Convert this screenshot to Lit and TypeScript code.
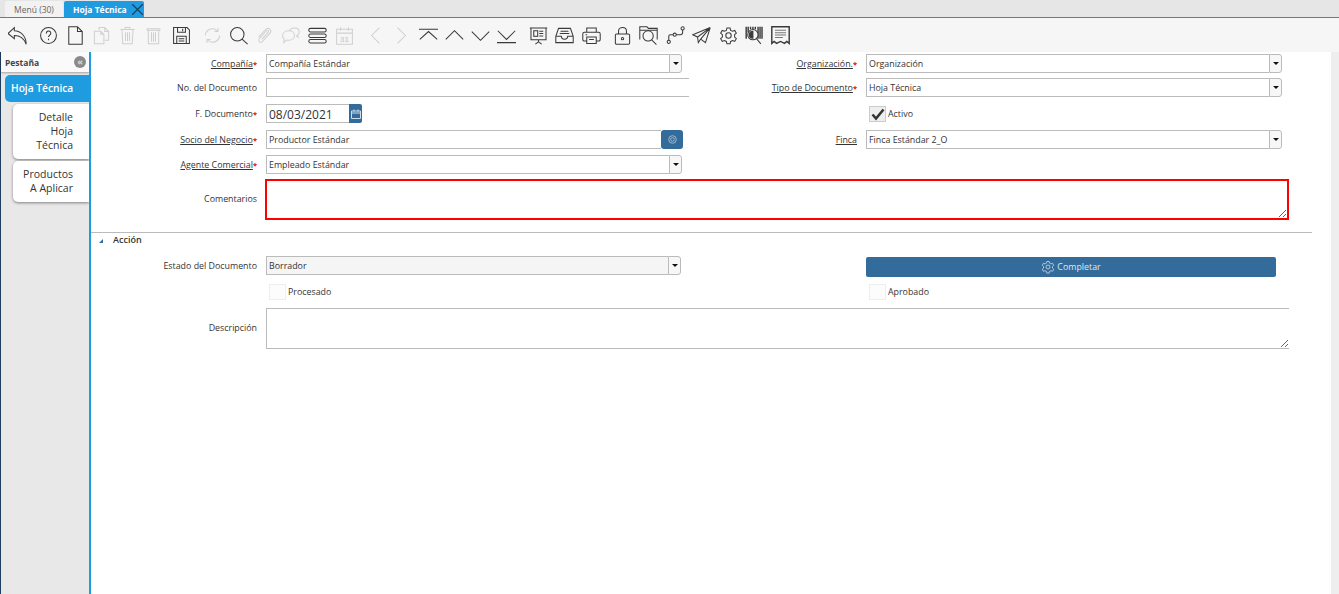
import { LitElement, html, css, svg } from 'lit'
import { customElement } from 'lit/decorators.js'

// toolbar: [name, left margin, disabled]
const TOOLS: [string, number, boolean][] = [
  ['undo', 4, false],
  ['help', 5, false],
  ['page', 1, false],
  ['copy', 0, true],
  ['trash', 0, true],
  ['trash2', 0, true],
  ['save', 2, false],
  ['refresh', 5, true],
  ['find', 0, false],
  ['clip', 0, true],
  ['chat', 0, true],
  ['rows', 1, false],
  ['cal', 1, true],
  ['prev', 5, true],
  ['next', 0, true],
  ['first', 1, false],
  ['up', 0, false],
  ['down', 0, false],
  ['last', 0, false],
  ['report', 6, false],
  ['tray', 0, false],
  ['print', 1, false],
  ['lock', 5, false],
  ['folder', 0, false],
  ['route', 1, false],
  ['send', 0, false],
  ['gear', 1, false],
  ['barcode', 0, false],
  ['receipt', 0, false],
]

const GEAR = svg`<circle cx="12" cy="12" r="3.4"/><path d="M10 2.5h4l.7 3 2.4 1.2 2.8-1.1 2 3.4-2.2 2v3l2.2 2-2 3.4-2.8-1.1-2.4 1.2-.7 3h-4l-.7-3-2.4-1.2-2.8 1.1-2-3.4 2.2-2v-3l-2.2-2 2-3.4 2.8 1.1 2.4-1.2z"/>`

const ICONS: Record<string, unknown> = {
  undo: svg`<path d="M8 2 0 9.500 8 16v-4c7 0 12 3 15 11C23 13 16 6 8 6z"/>`,
  help: svg`<circle cx="12" cy="12" r="10"/><path d="M9.300 9.500c0-4 5.600-4 5.600-.5 0 2.300-2.900 2.500-2.900 5"/><path d="M12 16v2"/>`,
  page: svg`<path d="M3.500 1h11l6 6v16h-17zM14.500 1v6h6"/>`,
  copy: svg`<path d="M9 5.500V2h7l5 5v11h-5M16 2v5h5M3 6.500h8l4 4v12H3zM11 6.500v4h4"/>`,
  trash: svg`<path d="M3 4.500h18M9 4.500V2h6v2.500M5 4.500l1 18h12l1-18M9.500 8v11M12 8v11M14.500 8v11"/>`,
  trash2: svg`<path d="M4 3.500h16v2H4zM5.500 5.500v17h13v-17M9.500 8v12M12 8v12M14.500 8v12"/>`,
  save: svg`<path d="M2 2h17l3 3v17H2zM7 2v6h10V2M13.500 3.500v3M6 22v-9h12v9M8.500 16h7M8.500 19h7"/>`,
  refresh: svg`<path d="M3 12c0-6 6-10 12-8l4 3M19 2.500V7h-4.500M21 12c0 6-6 10-12 8l-4-3M5 21.500V17h4.500"/>`,
  find: svg`<circle cx="10.500" cy="10.500" r="8.500"/><path d="m16.500 16.500 7 6.500"/>`,
  clip: svg`<path d="M4.500 14 14 4c3-3 8 1 5 5L9 20c-2 2-6-1-3.500-4l9-10c1.500-1.500 3.500.5 2 2l-8 9"/>`,
  chat: svg`<path d="M10 6c4 0 7 2.500 7 6s-3 6-7 6H6.500L3.500 21l.5-4.500C2.500 15.300 2 13.500 2 12c0-3.500 3.500-6 8-6z"/><path d="M11 6c.5-2 3-3.500 6-3.500 3.500 0 6 2 6 5 0 1.500-.7 2.800-2 3.600l.5 3-2.500-2"/>`,
  rows: svg`<rect x="1" y="3" width="22" height="4.500" rx="2.200"/><rect x="1" y="10" width="22" height="4.500" rx="2.200"/><rect x="1" y="17" width="22" height="4.500" rx="2.200"/>`,
  cal: svg`<path d="M2 4h20v19H2zM2 9h20M7 1.500V6M17 1.500V6"/><text x="12" y="20" text-anchor="middle" font-size="10" font-family="Liberation Sans, sans-serif" font-weight="700" stroke="none" fill="currentColor">31</text>`,
  prev: svg`<path d="M17 2 7 12l10 10"/>`,
  next: svg`<path d="M7 2l10 10L7 22"/>`,
  first: svg`<path d="M0 4h24M1 17 12 7l11 10"/>`,
  up: svg`<path d="M1 17 12 6l11 11"/>`,
  down: svg`<path d="M1 7l11 11L23 7"/>`,
  last: svg`<path d="M1 6l11 11L23 6M0 21h24"/>`,
  report: svg`<path d="M1 2.500h22M2.500 2.500v15h19v-15M12 17.500V20M8 23l4-3 4 3"/><rect x="6" y="6" width="5" height="7"/><path d="M13 6.500h5M13 9.500h5M13 12.500h5"/>`,
  tray: svg`<path d="M4.500 3h15l3.500 10v8H1v-8zM1 13h7c0 5 8 5 8 0h7M7 6.500h10M6 9.500h12"/>`,
  print: svg`<path d="M6 8V2.500h12V8M6 19H3.500A2 2 0 0 1 1 17v-7a2 2 0 0 1 2-2h18a2 2 0 0 1 2 2v7a2 2 0 0 1-2.500 2H18M6 14h12v8H6zM9 17h6M4.500 11h2"/>`,
  lock: svg`<rect x="3" y="10" width="18" height="13" rx="1.500"/><path d="M7 10V6.500c0-6 10-6 10 0V10"/><circle cx="12" cy="16" r="1.500"/>`,
  folder: svg`<path d="M1 17V1h9l2 2h11v14M1 5.500h22"/><circle cx="11.500" cy="12.500" r="6.500"/><path d="m16 17.500 6 6"/>`,
  route: svg`<circle cx="3.500" cy="20" r="2"/><circle cx="11" cy="11" r="2"/><circle cx="21" cy="3" r="2"/><path d="M3.500 18v-5c0-2 1-2 2-2H9M13 11h5c2 0 3-1 3-3V5"/>`,
  send: svg`<path d="M23 2 1 11l6 3zM23 2 7 14l1 7 3-4.500zM23 2l-6 19-6-4.500"/>`,
  gear: GEAR,
  barcode: svg`<path d="M1.500 1v15M4 1v7M7 1v3M10 1v3M13 1v3M16.500 1v15M19 1v15M21.500 1v15" stroke-width="1.800"/><circle cx="10" cy="11" r="6.500" fill="#f6f6f6"/><path d="M10 6.500a4.500 4.500 0 0 0 0 9z" fill="currentColor"/><path d="m14.500 16 5.500 6.500"/>`,
  receipt: svg`<path d="M1 1h22v21l-3-2.500-3 2.500-5-2.500-5 2.500-3-2.500-3 2.500z" stroke-width="1.800"/><path d="M5 5.500h14M5 8.500h14M5 11.500h14M5 14.500h10" stroke="#777" />`,
}

@customElement('app-root')
export class AppRoot extends LitElement {
  static styles = css`
    :host {
      display: block;
      height: 594px;
      overflow: hidden;
      font-family: 'Open Sans', sans-serif;
      font-size: 8.850px;
      color: #333;
      background: #fff;
    }

    /* window tabs */
    .tabs {
      height: 17px;
      display: flex;
      align-items: flex-end;
      gap: 1px;
      padding-left: 5px;
      background: #e6e6e6;
      border-bottom: 1px solid #2a8fc9;
    }
    .tab {
      height: 16px;
      display: flex;
      align-items: center;
      justify-content: center;
      box-sizing: border-box;
      border-radius: 2px 2px 0 0;
      font-size: 8.500px;
      white-space: nowrap;
    }
    .tab-menu {
      width: 58px;
      background: #f2f2f2;
      color: #666;
    }
    .tab-active {
      width: 80px;
      padding-left: 9px;
      justify-content: flex-start;
      gap: 5px;
      background: #1f9ce0;
      color: #fff;
      font-weight: 700;
    }
    .tab-close {
      width: 11px;
      height: 11px;
      flex: none;
      fill: none;
      stroke: #14456e;
      stroke-width: 1.300;
    }

    /* toolbar */
    .toolbar {
      height: 34px;
      display: flex;
      align-items: center;
      background: #f6f6f6;
    }
    .tool {
      width: 26px;
      height: 26px;
      flex: none;
      display: flex;
      align-items: center;
      justify-content: center;
      color: #3a3a3a;
    }
    .tool.off {
      color: #d0d0d0;
    }
    .tool svg {
      width: 19px;
      height: 19px;
      fill: none;
      stroke: currentColor;
      stroke-width: 1.300;
    }

    .body {
      display: flex;
      height: 543px;
      border-left: 1px solid #1c3f60;
    }

    /* left panel */
    .side {
      width: 88px;
      flex: none;
      display: flex;
      flex-direction: column;
      align-items: flex-end;
      background: #e8e8e8;
    }
    .side-head {
      align-self: stretch;
      height: 20px;
      display: flex;
      align-items: center;
      justify-content: space-between;
      padding: 0 3px 0 4px;
      background: #fafafa;
      box-shadow: 0 1px 2px rgba(0, 0, 0, 0.3);
      font-size: 8.500px;
      font-weight: 700;
      color: #444;
    }
    .collapse {
      width: 12px;
      height: 12px;
      border-radius: 50%;
      background: #8a8a8a;
      color: #ddd;
      font-size: 9px;
      line-height: 11px;
      text-align: center;
    }
    .stab {
      box-sizing: border-box;
      width: 76px;
      margin-top: 2px;
      padding: 6px 16px 7px 4px;
      border-radius: 5px 0 0 5px;
      background: #fff;
      box-shadow: 0 1px 3px rgba(0, 0, 0, 0.45);
      font-size: 10.500px;
      line-height: 14px;
      text-align: right;
    }
    .stab-active {
      width: 84px;
      height: 27px;
      margin-top: 3px;
      padding: 0 0 0 6px;
      background: #1f9ce0;
      box-shadow: none;
      color: #fff;
      font-size: 10.200px;
      font-weight: 600;
      line-height: 27px;
      text-align: left;
    }

    .rule {
      width: 2px;
      flex: none;
      background: #1f9ce0;
    }

    .main {
      width: 1240px;
      flex: none;
    }
    .scrollstrip {
      flex: 1;
      background: #eee;
    }

    /* form */
    .grid {
      display: grid;
      grid-template-columns: 175px 423px 177px 423px;
    }
    .top {
      padding-top: 2px;
      grid-template-rows: 24px 26px 26px 25px 24px 41px;
    }
    .bottom {
      padding-top: 9px;
      grid-template-rows: 27px 25px 41px;
    }
    .label {
      display: flex;
      justify-content: flex-end;
      align-items: center;
      height: 19px;
      padding-right: 9px;
      white-space: nowrap;
    }
    .label.tall {
      height: 39px;
    }
    .link {
      text-decoration: underline;
    }
    .req {
      color: #e00;
      font-size: 7.500px;
      font-weight: 700;
    }
    .field {
      display: flex;
      height: 19px;
    }
    .input {
      flex: 1;
      box-sizing: border-box;
      height: 19px;
      min-width: 0;
      padding-left: 2px;
      display: flex;
      align-items: center;
      border: 1px solid #bbb;
      background: #fff;
    }
    .input.open {
      border-right: none;
    }
    .input.grey {
      background: #f5f5f5;
    }
    .w-select {
      width: 416px;
    }
    .w-state {
      width: 415px;
    }
    .w-bpartner {
      width: 417px;
    }
    .w-date {
      width: 96px;
    }
    .date {
      padding-top: 1px;
      font-size: 12px;
    }
    .arrow {
      width: 13px;
      flex: none;
      box-sizing: border-box;
      display: flex;
      align-items: center;
      justify-content: center;
      border: 1px solid #bbb;
      border-radius: 0 3px 3px 0;
      background: #f7f7f7;
    }
    .arrow::after {
      content: '';
      border-top: 3px solid #111;
      border-left: 3px solid transparent;
      border-right: 3px solid transparent;
    }
    .blue-btn {
      flex: none;
      display: flex;
      align-items: center;
      justify-content: center;
      background: #336b9b;
      border-radius: 0 2px 2px 0;
    }
    .blue-btn svg {
      fill: none;
      stroke: #cfdde9;
    }
    .btn-cal {
      width: 13px;
    }
    .btn-cal svg {
      width: 10px;
      height: 10px;
    }
    .btn-search {
      width: 22px;
      border-radius: 3px;
    }
    .btn-search svg {
      width: 9px;
      height: 9px;
      stroke: #9db8d0;
    }
    .span {
      grid-column: 2 / -1;
    }
    textarea {
      display: block;
      box-sizing: border-box;
      width: 1023px;
      height: 41px;
      margin: 0;
      padding: 0;
      outline: none;
      background: #fff;
    }
    .area-error {
      margin-left: -1px;
      width: 1024px;
      border: 2px solid #f00;
    }
    .area-plain {
      border: 1px solid #bbb;
      border-right: none;
    }
    .check {
      display: flex;
      align-items: center;
      gap: 2px;
      height: 17px;
      padding-left: 3px;
    }
    .check-active {
      margin-top: 1px;
    }
    .box {
      width: 17px;
      height: 16px;
      flex: none;
      box-sizing: border-box;
      border: 1px solid #eee;
      background: #fcfcfc;
    }
    .box-on {
      border: 1px solid #ccc;
      background: #eee;
    }
    .box-on svg {
      display: block;
      width: 15px;
      height: 14px;
      fill: none;
      stroke: #333;
      stroke-width: 2.500;
    }
    .complete {
      width: 410px;
      height: 20px;
      margin-top: 1px;
      display: flex;
      align-items: center;
      justify-content: center;
      gap: 2px;
      background: #336b9b;
      border-radius: 2px;
      color: #e0e6ec;
    }
    .complete svg {
      width: 14px;
      height: 14px;
      fill: none;
      stroke: #d5e0ea;
      stroke-width: 1.300;
    }
    .sep {
      width: 1221px;
      height: 1px;
      margin-top: 12px;
      background: #bbb;
    }
    .group {
      height: 13px;
      display: flex;
      align-items: center;
      gap: 10px;
      padding-left: 8px;
      margin-bottom: 1px;
      font-size: 9px;
      font-weight: 600;
    }
    .group i {
      margin-top: 3px;
      border-bottom: 4px solid #2a6ea8;
      border-left: 4px solid transparent;
    }
  `

  private label(text: string, link = false, req = false, tall = false) {
    return html`<div class="label ${tall ? 'tall' : ''}">
      <span class=${link ? 'link' : ''}>${text}</span>${req ? html`<span class="req">*</span>` : ''}
    </div>`
  }

  private select(text: string, cls = 'w-select', grey = false) {
    return html`<div class="field ${cls}">
      <div class="input open ${grey ? 'grey' : ''}">${text}</div>
      <div class="arrow"></div>
    </div>`
  }

  render() {
    return html`
      <div class="tabs">
        <div class="tab tab-menu">Menú (30)</div>
        <div class="tab tab-active">
          Hoja Técnica
          <svg class="tab-close" viewBox="0 0 11 11"><path d="M0 0l11 11M11 0 0 11" /></svg>
        </div>
      </div>
      <div class="toolbar">
        ${TOOLS.map(
          ([name, gap, off]) => html`<div class="tool ${off ? 'off' : ''}" style="margin-left:${gap}px">
            <svg viewBox="0 0 24 24">${ICONS[name]}</svg>
          </div>`
        )}
      </div>
      <div class="body">
        <div class="side">
          <div class="side-head">Pestaña <span class="collapse">«</span></div>
          <div class="stab stab-active">Hoja Técnica</div>
          <div class="stab">Detalle Hoja Técnica</div>
          <div class="stab">Productos A Aplicar</div>
        </div>
        <div class="rule"></div>
        <div class="main">
          <div class="grid top">
            ${this.label('Compañía', true, true)} ${this.select('Compañía Estándar')}
            ${this.label('Organización.', true, true)} ${this.select('Organización')}

            ${this.label('No. del Documento')}
            <div class="field"><div class="input open"></div></div>
            ${this.label('Tipo de Documento', true, true)} ${this.select('Hoja Técnica')}

            ${this.label('F. Documento', false, true)}
            <div class="field w-date">
              <div class="input open date">08/03/2021</div>
              <div class="blue-btn btn-cal">
                <svg viewBox="0 0 10 10"><path d="M.5 2h9v7.500h-9zM.5 4h9M3 .5v2M7 .5v2" /></svg>
              </div>
            </div>
            <div></div>
            <div class="check check-active">
              <div class="box box-on">
                <svg viewBox="0 0 15 14"><path d="M2.500 7.500 6 11.500 13.500 2.500" /></svg>
              </div>
              Activo
            </div>

            ${this.label('Socio del Negocio', true, true)}
            <div class="field w-bpartner">
              <div class="input open">Productor Estándar</div>
              <div class="blue-btn btn-search">
                <svg viewBox="0 0 9 9"><circle cx="4.500" cy="4.500" r="3.800" /><circle cx="4.500" cy="4.500" r="1.800" /></svg>
              </div>
            </div>
            ${this.label('Finca', true)} ${this.select('Finca Estándar 2_O')}

            ${this.label('Agente Comercial', true, true)} ${this.select('Empleado Estándar')}
            <div></div>
            <div></div>

            ${this.label('Comentarios', false, false, true)}
            <div class="span"><textarea class="area-error"></textarea></div>
          </div>

          <div class="sep"></div>
          <div class="group"><i></i>Acción</div>

          <div class="grid bottom">
            ${this.label('Estado del Documento')} ${this.select('Borrador', 'w-state', true)}
            <div></div>
            <div class="complete">
              <svg viewBox="0 0 24 24">${GEAR}</svg>
              Completar
            </div>

            <div></div>
            <div class="check"><div class="box"></div>Procesado</div>
            <div></div>
            <div class="check"><div class="box"></div>Aprobado</div>

            ${this.label('Descripción', false, false, true)}
            <div class="span"><textarea class="area-plain"></textarea></div>
          </div>
        </div>
        <div class="scrollstrip"></div>
      </div>
    `
  }
}
